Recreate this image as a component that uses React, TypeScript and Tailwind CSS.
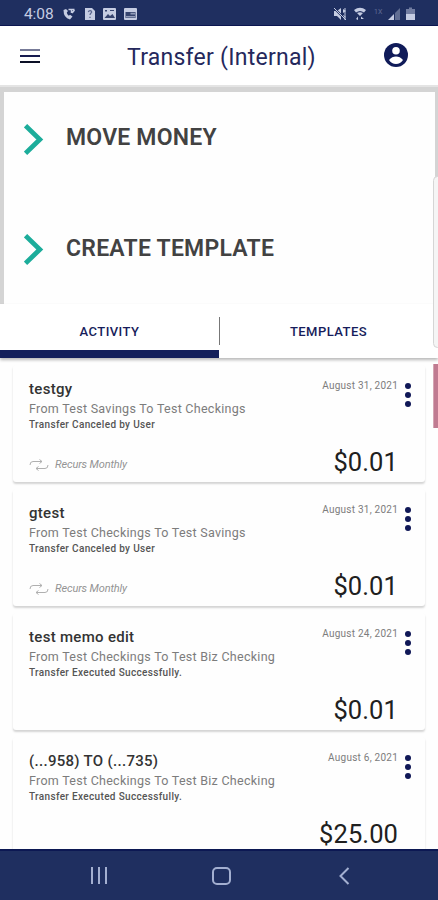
import React from "react";

type Transfer = {
  title: string;
  route: string;
  status: string;
  date: string;
  amount: string;
  recurs?: boolean;
};

const transfers: Transfer[] = [
  { title: "testgy", route: "From Test Savings To Test Checkings", status: "Transfer Canceled by User", date: "August 31, 2021", amount: "$0.01", recurs: true },
  { title: "gtest", route: "From Test Checkings To Test Savings", status: "Transfer Canceled by User", date: "August 31, 2021", amount: "$0.01", recurs: true },
  { title: "test memo edit", route: "From Test Checkings To Test Biz Checking", status: "Transfer Executed Successfully.", date: "August 24, 2021", amount: "$0.01" },
  { title: "(...958) TO (...735)", route: "From Test Checkings To Test Biz Checking", status: "Transfer Executed Successfully.", date: "August 6, 2021", amount: "$25.00" },
];

function StatusBar() {
  return (
    <div className="flex h-[26px] shrink-0 items-center border-b border-[#0b1650] bg-[#1f2f60] pt-[2px] pl-[24px] text-[#c5cce2]">
      <span className="w-[38px] text-[15.5px] leading-4 tracking-[-0.1px]">4:08</span>
      <svg className="h-[14px] w-[77px]" viewBox="0 0 77 14" fill="currentColor">
        <path d="M1.5 3 Q1.5 11 8 12.5 L10.5 9.5 L8 7.8 L6.8 8.8 Q5 7.5 4.8 5.5 L6 4 L4 2 Z" />
        <path d="M6.5 2.5H12.5M9.5 2.5V6M10 6L12.5 3" stroke="currentColor" strokeWidth="1.5" fill="none" />
        <path d="M23 1H30L33 4V13H23Z" />
        <path d="M26.3 5Q26.8 3.6 28.2 3.7Q30 4.1 29.5 5.5Q28 6.7 28 8M28 9.8V11" stroke="#5c6890" strokeWidth="1.3" fill="none" />
        <rect x="41" y="1" width="13" height="12" rx="1" />
        <path d="M42.5 11L46 7L48 9L50.5 7L53 11Z" fill="#35436e" />
        <path d="M43 3H45V4.5H43ZM48 3H52V4H48Z" fill="#35436e" />
        <rect x="62" y="1" width="13" height="12" rx="1" />
        <path d="M63.5 5H73.5V11H63.5Z" fill="#35436e" />
        <path d="M68.5 5.8H73V7.5H68.5ZM64 9H73V10.5H64Z" opacity=".65" />
      </svg>
      <svg className="mr-[22px] ml-auto h-[14px] w-[83px]" viewBox="0 0 83 14" fill="currentColor">
        <path d="M1 4H4L8 1V13L4 9H1ZM10 2L13 4L10 6ZM10 8L13 10L10 12Z" />
        <path d="M1 1L13 13" stroke="#1f2f60" strokeWidth="2" />
        <path d="M1 1L13 13M12 1V13" stroke="currentColor" strokeWidth="1" />
        <path d="M21 3Q27 -1.5 33 3L31 5.5Q27 2.5 23 5.5Z" />
        <path d="M24 6Q27 4.5 30 6L27 9ZM23 12L25 9.5V13ZM28 9.5L31 12H28Z" />
        <text x="41" y="7" fontSize="7" opacity=".38">1X</text>
        <path d="M55 13L61 7V13Z" />
        <path d="M62 6L67 1V13H62Z" opacity=".4" />
        <path d="M74 2H76V0.5H79V2H82V7H73V2Z" opacity=".5" />
        <rect x="73" y="7" width="9" height="6" />
      </svg>
    </div>
  );
}

function Header() {
  return (
    <header className="flex h-[59px] shrink-0 items-center bg-white pl-5 text-[#25285c]">
      <div className="flex w-5 flex-col gap-1">
        <i className="h-[2px] bg-[#777b98]" />
        <i className="h-[2px] bg-[#171b50]" />
        <i className="h-[2px] bg-[#0c1026]" />
      </div>
      <h1 className="ml-[87px] w-[257px] pt-[5px] text-[23px] leading-7 tracking-[0.26px]">Transfer (Internal)</h1>
      <svg className="-mt-px size-6" viewBox="0 0 24 24">
        <circle cx="12" cy="12" r="12" fill="#101b59" />
        <circle cx="12" cy="7.8" r="3.8" fill="white" />
        <path d="M5 17Q8 13.6 12 13.6Q16 13.6 19 17Q16.4 21 12 21Q7.6 21 5 17Z" fill="white" />
      </svg>
    </header>
  );
}

function ActionRow({ label, spacing }: { label: string; spacing: string }) {
  return (
    <div className="flex items-center">
      <svg className="h-8 w-5" viewBox="0 0 20 32" fill="none" stroke="#1cad9b" strokeWidth="4.8">
        <path d="M1.5 1.7L15.8 15.5L1.5 29.3" />
      </svg>
      <span className={"ml-[22px] text-[23px] leading-7 font-semibold text-[#424242] " + spacing}>{label}</span>
    </div>
  );
}

function TransferCard({ item }: { item: Transfer }) {
  return (
    <article className="flex h-[117px] shrink-0 justify-between rounded-[3px] bg-[#fefefe] pt-4 pr-[14px] pl-4 shadow-[0_2px_2px_rgba(0,0,0,0.17)]">
      <div className="whitespace-nowrap">
        <h2 className="text-[15px] leading-[17px] font-medium tracking-[0.3px] text-[#333]">{item.title}</h2>
        <p className="mt-[2px] text-[12.5px] leading-[18px] tracking-[0.27px] text-[#7c7c7c]">{item.route}</p>
        <p className="text-[10px] leading-[14px] font-medium tracking-[0.34px] text-[#555]">{item.status}</p>
        {item.recurs && (
          <div className="mt-[26px] flex items-center text-[#949494]">
            <svg className="h-3 w-[20px] text-[#b0b0b0]" viewBox="0 0 20 12" fill="none" stroke="currentColor" strokeWidth="1">
              <path d="M1 6Q1 2.5 4 2.5H13M10.5 .5L13 2.5L10.5 4.5M19 6Q19 9.5 16 9.5H7M9.5 7.5L7 9.5L9.5 11.5" />
            </svg>
            <span className="ml-[6px] text-[11px] leading-[14px] tracking-[-0.14px] italic">Recurs Monthly</span>
          </div>
        )}
      </div>
      <div className="flex">
        <div className="flex flex-col items-end">
          <time className="-mt-[3px] text-[10px] leading-4 tracking-[0.24px] text-[#7c7c7c]">{item.date}</time>
          <span className="mt-[53px] text-[25.5px] leading-[30px] tracking-[0.1px] text-[#202020]">{item.amount}</span>
        </div>
        <div className="mt-[2px] ml-[7px] flex flex-col gap-[3px]">
          <i className="size-[6px] rounded-full bg-[#101857]" />
          <i className="size-[6px] rounded-full bg-[#101857]" />
          <i className="size-[6px] rounded-full bg-[#101857]" />
        </div>
      </div>
    </article>
  );
}

export default function App() {
  return (
    <div className="relative flex h-[900px] w-[438px] flex-col overflow-hidden bg-white font-['Roboto',sans-serif]">
      <StatusBar />
      <Header />
      <div className="h-[2px] shrink-0 bg-[#e4e4e4]" />
      <section className="flex h-[217px] shrink-0 flex-col gap-[78px] border-t-[5px] border-r-[3px] border-l-4 border-[#d4d4d4] bg-[#fefefe] pt-[32px] pl-5">
        <ActionRow label="MOVE MONEY" spacing="-mt-[5px] tracking-[0.2px]" />
        <ActionRow label="CREATE TEMPLATE" spacing="-mt-[3px] tracking-[0.24px]" />
      </section>
      <nav className="z-10 flex h-[54px] shrink-0 bg-white text-[13px] font-medium text-[#171d5b] shadow-[0_2px_3px_rgba(0,0,0,0.28)]">
        <div className="flex w-[219px] items-center justify-center border-b-8 border-[#14205b] pt-[9px] tracking-[0.45px]">ACTIVITY</div>
        <div className="my-[13px] w-px bg-[#777]" />
        <div className="flex flex-1 items-center justify-center pt-px pr-px tracking-[0.45px]">TEMPLATES</div>
      </nav>
      <main className="flex min-h-0 flex-1 flex-col gap-[7px] overflow-hidden bg-[#fefefe] px-[13px] pt-[7px]">
        {transfers.map((item) => <TransferCard key={item.title} item={item} />)}
      </main>
      <footer className="flex h-[51px] shrink-0 items-center border-t-2 border-[#0c1853] bg-[#1f2f60] pl-[91px] text-[#a3afd0]">
        <svg className="h-[17px] w-4" viewBox="0 0 16 17" stroke="currentColor" strokeWidth="2">
          <path d="M1 0V17M8 0V17M15 0V17" />
        </svg>
        <svg className="ml-[105px] h-[18px] w-[19px]" viewBox="0 0 19 18" fill="none" stroke="currentColor" strokeWidth="2">
          <rect x="1" y="1" width="17" height="16" rx="4" />
        </svg>
        <svg className="ml-[108px] h-[18px] w-[11px]" viewBox="0 0 11 18" fill="none" stroke="currentColor" strokeWidth="2">
          <path d="M9.5 1L1.5 9L9.5 17" />
        </svg>
      </footer>
      <div className="absolute top-[176px] -right-1 z-20 h-[172px] w-[9px] rounded-[5px] border border-[#d5d5d5] bg-[#f5f5f5]" />
      <div className="absolute top-[364px] right-0 z-20 h-[64px] w-[5px] border-l border-[#d5a5b3] bg-[#c07b91]" />
    </div>
  );
}
